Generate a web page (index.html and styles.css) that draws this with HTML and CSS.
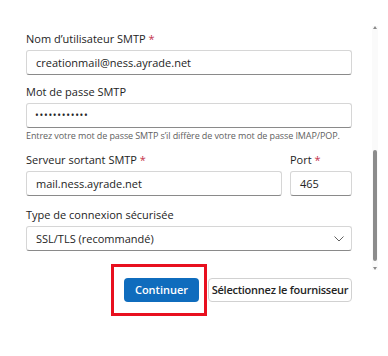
FILE: index.html
```html
<!DOCTYPE html>
<html lang="fr">
<head>
    <meta charset="UTF-8">
    <meta name="viewport" content="width=device-width, initial-scale=1.0">
    <title>Paramètres SMTP</title>
    <link rel="stylesheet" href="styles.css">
</head>
<body>

    <form class="smtp-form">
        <!-- Nom d'utilisateur -->
        <div class="field first">
            <label class="field-label">Nom d’utilisateur SMTP <span class="req">*</span></label>
            <div class="input">creationmail@ness.ayrade.net</div>
        </div>

        <!-- Mot de passe -->
        <div class="field">
            <label class="field-label">Mot de passe SMTP</label>
            <div class="input password">••••••••••••</div>
            <div class="hint">Entrez votre mot de passe SMTP s’il diffère de votre mot de passe IMAP/POP.</div>
        </div>

        <!-- Serveur + port -->
        <div class="field-row">
            <div class="field server">
                <label class="field-label">Serveur sortant SMTP <span class="req">*</span></label>
                <div class="input">mail.ness.ayrade.net</div>
            </div>
            <div class="field port">
                <label class="field-label">Port <span class="req">*</span></label>
                <div class="input">465</div>
            </div>
        </div>

        <div class="field security">
            <label class="field-label">Type de connexion sécurisée</label>
            <div class="input select">
                <span>SSL/TLS (recommandé)</span>
                <svg width="10" height="6" viewBox="0 0 10 6"><path d="M0.5 0.5 L5 5 L9.5 0.5" fill="none" stroke="#616161" stroke-width="1"/></svg>
            </div>
        </div>

        <div class="actions">
            <div class="highlight">
                <button type="button" class="btn btn-primary">Continuer</button>
            </div>
            <button type="button" class="btn btn-secondary">Sélectionnez le fournisseur</button>
        </div>
    </form>

    <!-- Barre de défilement -->
    <div class="scrollbar">
        <div class="arrow up"></div>
        <div class="thumb"></div>
        <div class="arrow down"></div>
    </div>

</body>
</html>
```

FILE: styles.css
```css
* {
    box-sizing: border-box;
    margin: 0;
    padding: 0;
}

body {
    font-family: "Open Sans", "Noto Sans", sans-serif;
    background-color: #fff;
    color: #242424;
    width: 388px;
    height: 356px;
    overflow: hidden;
    position: relative;
}

.smtp-form {
    width: 352px;
    padding-left: 26px;
    padding-top: 31px;
}

.field {
    margin-top: 9px;
}

.field.first {
    margin-top: 0;
}

.field-label {
    display: block;
    font-size: 11px;
    line-height: 16px;
    margin-bottom: 3px;
}

.req {
    color: #c4314b;
}

.input {
    height: 25px;
    border: 1px solid #d6d6d6;
    border-bottom-color: #8a8a8a;
    border-radius: 3px;
    padding: 0 9px;
    font-size: 11px;
    line-height: 23px;
    background-color: #fff;
}

.password {
    font-size: 10px;
    letter-spacing: 0.7px;
    padding-left: 8px;
}

.hint {
    margin-top: 2px;
    font-size: 9px;
    line-height: 12px;
    color: #616161;
    letter-spacing: -0.1px;
}

.field-row {
    display: flex;
    gap: 8px;
    margin-top: 10px;
}

.field-row .field {
    margin-top: 0;
}

.server {
    flex: 1;
}

.port {
    width: 62px;
}

.security {
    margin-top: 11px;
}

.select {
    display: flex;
    align-items: center;
    justify-content: space-between;
    padding-right: 7px;
}

.actions {
    display: flex;
    align-items: center;
    margin-top: 13px;
    margin-left: 85px;
}

.highlight {
    border: 3px solid #e8101f;
    padding: 10px 5px 11px 10px;
}

.btn {
    height: 24px;
    padding: 0;
    font-family: "Open Sans", "Noto Sans", sans-serif;
    font-size: 11px;
    font-weight: 600;
    border-radius: 4px;
    cursor: pointer;
    white-space: nowrap;
}

.btn-primary {
    width: 75px;
    background-color: #0f6cbd;
    color: #fff;
    border: none;
}

.btn-secondary {
    width: 152px;
    margin-left: 1px;
    background-color: #fff;
    color: #242424;
    border: 1px solid #d1d1d1;
    letter-spacing: -0.25px;
}

/* Scrollbar */
.scrollbar {
    position: absolute;
    left: 372px;
    top: 26px;
    width: 6px;
    height: 244px;
    background-color: #fafafa;
    display: flex;
    flex-direction: column;
    align-items: center;
}

.arrow {
    width: 0;
    height: 0;
    border-left: 2px solid transparent;
    border-right: 2px solid transparent;
}

.arrow.up {
    border-bottom: 3px solid #8a8a8a;
}

.arrow.down {
    border-top: 3px solid #8a8a8a;
}

.thumb {
    width: 4px;
    height: 111px;
    margin-top: auto;
    margin-bottom: 6px;
    background-color: #8c8c8c;
    border-radius: 2px;
}
```
